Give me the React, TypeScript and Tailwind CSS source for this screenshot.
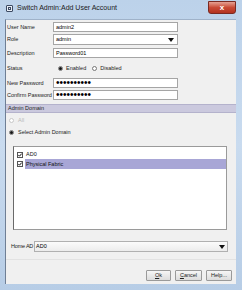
import React from "react";

const font = { fontFamily: '"Liberation Sans", Arial, sans-serif' };

function Field({ label, children }: { label: string; children: React.ReactNode }) {
  return (
    <div className="flex items-center h-[10px]">
      <span className="w-[47px] pl-[1px] text-[5.5px] text-[#222] whitespace-nowrap">{label}</span>
      {children}
    </div>
  );
}

function TextBox({ value, dots }: { value: string; dots?: boolean }) {
  return (
    <div className="w-[125px] h-[10px] bg-white border border-[#a5a5a5] flex items-center px-[2px] overflow-hidden">
      <span className={dots ? "text-[10px] leading-none text-black" : "text-[5.5px] text-black"}>
        {value}
      </span>
    </div>
  );
}

function Arrow() {
  return (
    <svg width="6" height="4" viewBox="0 0 6 4">
      <path d="M0 0 H6 L3 4 Z" fill="#111" />
    </svg>
  );
}

function Radio({ on, disabled }: { on?: boolean; disabled?: boolean }) {
  return (
    <span
      className={
        "w-[5px] h-[5px] rounded-full border flex items-center justify-center bg-white " +
        (disabled ? "border-[#c8c8c8]" : "border-[#777]")
      }
    >
      {on && <span className="w-[3px] h-[3px] rounded-full bg-[#111]" />}
    </span>
  );
}

function Check() {
  return (
    <span className="w-[6px] h-[6px] border border-[#555] bg-white flex items-center justify-center">
      <svg width="4" height="4" viewBox="0 0 4 4">
        <path d="M0.3 1.9 L1.5 3.2 L3.7 0.6" stroke="#111" strokeWidth="1" fill="none" />
      </svg>
    </span>
  );
}

function Btn({ children }: { children: React.ReactNode }) {
  return (
    <div className="h-[11px] border border-[#9a9a9a] rounded-[1px] bg-gradient-to-b from-[#f6f6f6] to-[#dcdcdc] flex items-center justify-center text-[5.5px] text-[#222]">
      {children}
    </div>
  );
}

export default function App() {
  return (
    <div style={font} className="w-[242px] h-[290px] bg-gradient-to-b from-[#bcd2ea] via-[#c9dbef] to-[#b7cde6] flex flex-col overflow-hidden">
      {/* title bar */}
      <div className="h-[19px] flex items-start shrink-0">
        <div className="flex items-center h-[16px] pl-[6px] gap-[4px]">
          <span className="w-[7px] h-[7px] border border-[#3c4a62] rounded-[1px] bg-[#e8eef6] flex items-center justify-center">
            <span className="w-[3px] h-[3px] border border-[#3c4a62]" />
          </span>
          <span className="text-[7px] text-[#1b1b1b]">Switch Admin:Add User Account</span>
        </div>
        <div className="ml-auto mr-[6px] mt-[1px] w-[28px] h-[13px] rounded-b-[3px] border border-[#7a2a22] bg-gradient-to-b from-[#e4a093] via-[#c94a36] to-[#b3321f] flex items-center justify-center">
          <span className="text-[8px] font-bold leading-none text-white">x</span>
        </div>
      </div>

      {/* client area */}
      <div className="flex-1 ml-[5px] mr-[6px] mb-[6px] border-l border-[#6f7f95] border-t border-t-[#9fb2c9] bg-[#f0f0f0] flex flex-col">
        <div className="pt-[2px] flex flex-col">
          <Field label="User Name">
            <TextBox value="admin2" />
          </Field>
          <div className="mt-[2px] flex items-center h-[11px]">
            <span className="w-[47px] pl-[1px] text-[5.5px] text-[#222]">Role</span>
            <div className="w-[125px] h-[11px] bg-white border border-[#a5a5a5] flex items-center px-[2px]">
              <span className="text-[5.5px] text-black">admin</span>
              <span className="ml-auto mr-[1px]">
                <Arrow />
              </span>
            </div>
          </div>
          <div className="mt-[3px]">
            <Field label="Description">
              <TextBox value="Password01" />
            </Field>
          </div>
          <div className="mt-[5px] flex items-center h-[10px]">
            <span className="w-[52px] pl-[1px] text-[5.5px] text-[#222]">Status</span>
            <Radio on />
            <span className="ml-[3px] text-[5.5px] text-[#222]">Enabled</span>
            <span className="ml-[6px]">
              <Radio />
            </span>
            <span className="ml-[3px] text-[5.5px] text-[#222]">Disabled</span>
          </div>
          <div className="mt-[5px]">
            <Field label="New Password">
              <TextBox value="••••••••••" dots />
            </Field>
          </div>
          <div className="mt-[2px]">
            <Field label="Confirm Password">
              <TextBox value="••••••••••" dots />
            </Field>
          </div>
        </div>

        {/* admin domain section */}
        <div className="mt-[4px] h-[9px] bg-[#cbc9de] border-y border-[#b4b2cc] flex items-center pl-[2px]">
          <span className="text-[5.5px] text-[#222]">Admin Domain</span>
        </div>
        <div className="pl-[3px] mt-[4px] flex items-center gap-[4px] h-[7px]">
          <Radio disabled />
          <span className="text-[5.5px] text-[#b8b8b8]">All</span>
        </div>
        <div className="pl-[3px] mt-[5px] flex items-center gap-[4px] h-[7px]">
          <Radio on />
          <span className="text-[5.5px] text-[#222]">Select Admin Domain</span>
        </div>

        <div className="mt-[10px] ml-[7px] w-[214px] h-[84px] bg-white border border-[#9a9a9a] border-l-[#6a6a6a] flex flex-col pt-[3px]">
          <div className="flex items-center h-[9px] pl-[3px] gap-[3px]">
            <Check />
            <span className="text-[5.5px] text-[#111]">AD0</span>
          </div>
          <div className="flex items-center h-[10px] pl-[3px] gap-[2px]">
            <Check />
            <span className="flex-1 h-[10px] bg-[#a8a6d6] flex items-center pl-[1px] text-[5.5px] text-[#111]">
              Physical Fabric
            </span>
          </div>
        </div>

        <div className="mt-[11px] ml-[5px] flex items-center h-[11px]">
          <span className="w-[23px] text-[5.5px] text-[#222] whitespace-nowrap tracking-[-0.2px]">Home AD</span>
          <div className="w-[194px] h-[11px] border border-[#b0b0b0] bg-gradient-to-b from-[#fbfbfb] to-[#ececec] flex items-center px-[1px]">
            <span className="text-[5.5px] text-black">AD0</span>
            <span className="ml-auto mr-[1px]">
              <Arrow />
            </span>
          </div>
        </div>

        <div className="mt-[7px] border-t border-[#e2e2e2]" />

        <div className="mt-[10px] flex justify-end gap-[4px] mr-[4px]">
          <div className="w-[25px]">
            <Btn>
              <span className="underline">O</span>k
            </Btn>
          </div>
          <div className="w-[27px]">
            <Btn>
              <span className="underline">C</span>ancel
            </Btn>
          </div>
          <div className="w-[26px]">
            <Btn>Help...</Btn>
          </div>
        </div>
      </div>
    </div>
  );
}
